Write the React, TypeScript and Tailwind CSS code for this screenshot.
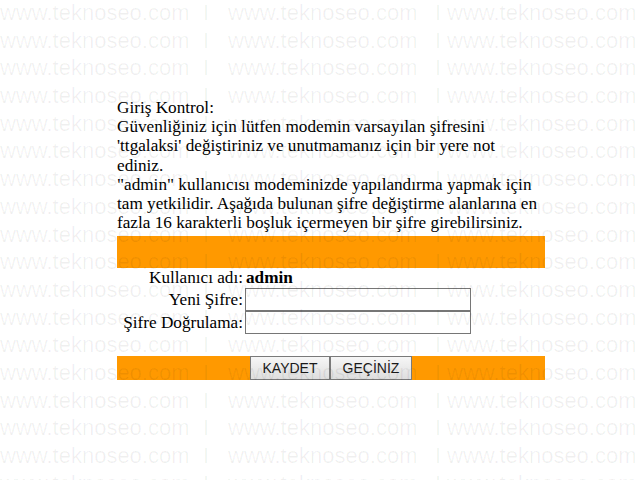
import React from "react";

const WATERMARK_ROWS = Array.from({ length: 19 }, (_, i) => i);

function WatermarkRow() {
  return (
    <div className="flex h-[27.7px] whitespace-nowrap">
      <span className="w-[203px] shrink-0">www.teknoseo.com</span>
      <span className="w-[25px] shrink-0">I</span>
      <span className="w-[207px] shrink-0">www.teknoseo.com</span>
      <span className="w-[12px] shrink-0">I</span>
      <span className="shrink-0">www.teknoseo.com</span>
    </div>
  );
}

export default function App() {
  return (
    <div className="relative w-[640px] h-[480px] overflow-hidden bg-white">
      <div className="pl-[117px] pt-[98px]">
        <div className="w-[428px] [font-family:Liberation_Serif,serif] text-[17.2px] leading-[19.2px] text-black">
          <p className="w-[424px]">
            Giriş Kontrol:
            <br />
            Güvenliğiniz için lütfen modemin varsayılan şifresini 'ttgalaksi'
            değiştiriniz ve unutmamanız için bir yere not ediniz.
            <br />
            "admin" kullanıcısı modeminizde yapılandırma yapmak için tam
            yetkilidir. Aşağıda bulunan şifre değiştirme alanlarına en fazla 16
            karakterli boşluk içermeyen bir şifre girebilirsiniz.
          </p>

          <div className="mt-[4px] h-[32px] bg-[#ff9900]" />

          <div className="grid grid-cols-[128px_226px] items-center">
            <div className="h-[20px] pr-[2px] text-right">Kullanıcı adı:</div>
            <div className="h-[20px] pl-[1px] font-bold">admin</div>

            <div className="pr-[2px] text-right">Yeni Şifre:</div>
            <input
              type="password"
              className="h-[23px] w-[226px] border border-[#767676] bg-white outline-none"
            />

            <div className="pr-[2px] text-right">Şifre Doğrulama:</div>
            <input
              type="password"
              className="h-[23px] w-[226px] border border-[#767676] bg-white outline-none"
            />
          </div>

          <div className="mt-[22px] flex h-[24px] justify-center bg-[#ff9900]">
            <button className="h-[24px] w-[80px] border border-[#7a7a7a] bg-gradient-to-b from-[#f6f6f6] to-[#dedede] [font-family:Liberation_Sans,sans-serif] text-[14px] text-[#1a1a1a]">
              KAYDET
            </button>
            <button className="h-[24px] w-[82px] border border-[#7a7a7a] bg-gradient-to-b from-[#f6f6f6] to-[#dedede] [font-family:Liberation_Sans,sans-serif] text-[14px] text-[#1a1a1a]">
              GEÇİNİZ
            </button>
          </div>
        </div>
      </div>

      {/* repeating site stamp laid over the whole page */}
      <div className="pointer-events-none absolute inset-0 -top-[1px] [font-family:Liberation_Sans,sans-serif] text-[22px] leading-[27.7px] text-[rgba(0,0,0,0.06)]">
        {WATERMARK_ROWS.map((i) => (
          <WatermarkRow key={i} />
        ))}
      </div>
    </div>
  );
}
